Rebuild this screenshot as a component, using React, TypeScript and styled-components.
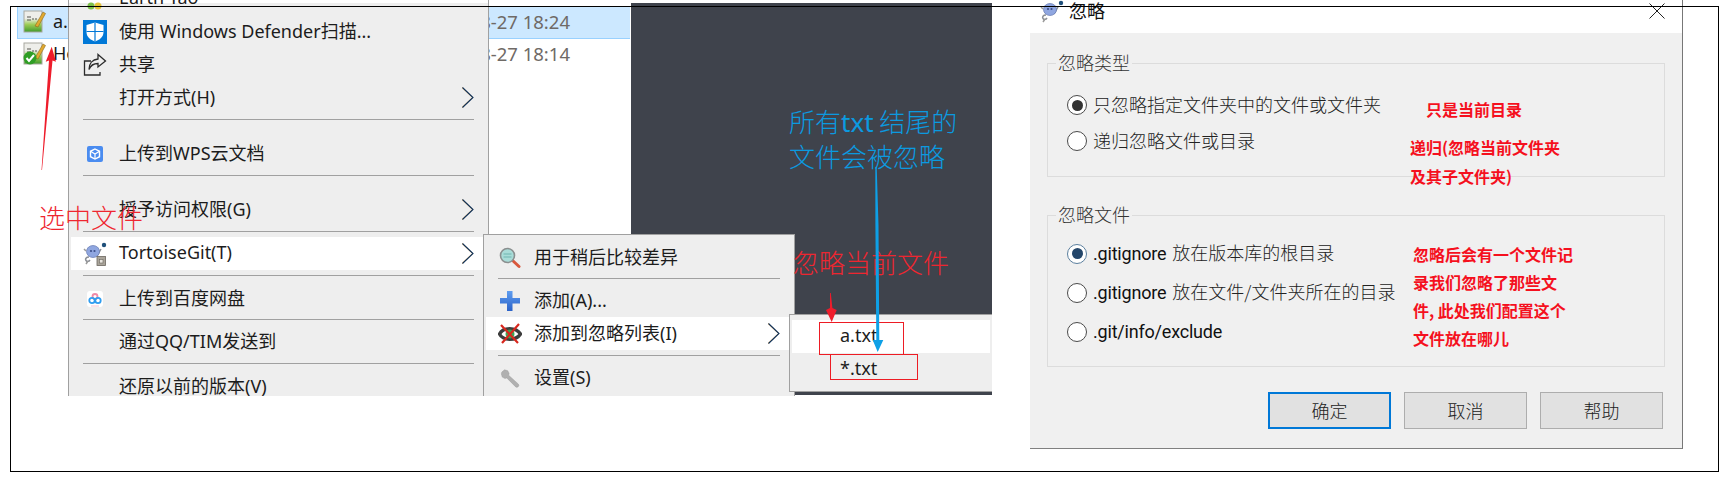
import React from "react";
import styled, { createGlobalStyle } from "styled-components";

const CJK = `"Noto Sans CJK SC", sans-serif`;

const GlobalStyle = createGlobalStyle`
  html, body {
    margin: 0;
    background: #fff;
  }
  body {
    width: 1726px;
    height: 477px;
    overflow: hidden;
    font-family: "Noto Sans", ${CJK};
    color: #1a1a1a;
  }
`;

const Stage = styled.div`
  position: relative;
  display: flex;
  width: 1726px;
  height: 477px;
  overflow: hidden;
`;

const Collage = styled.div`
  position: relative;
  flex: 0 0 1030px;
  height: 477px;
`;

const Frame = styled.div`
  position: absolute;
  left: 10px;
  top: 6px;
  width: 1707px;
  height: 464px;
  border: 1px solid #000;
  pointer-events: none;
  z-index: 5;
`;

const FileList = styled.div`
  position: absolute;
  left: 17px;
  top: 7px;
  width: 613px;
`;

const FileRow = styled.div<{ $selected?: boolean }>`
  display: grid;
  grid-template-columns: 30px 1fr auto;
  align-items: center;
  box-sizing: border-box;
  height: 32px;
  padding: 0 60px 4px 6px;
  font-size: 18px;
  background: ${(p) => (p.$selected ? "#cce8ff" : "#fff")};
  box-shadow: ${(p) => (p.$selected ? "inset 0 -1px #99d1ff, inset 1px 0 #99d1ff" : "none")};
`;

const FileDate = styled.span`
  font-size: 18.5px;
  color: #6f6a66;
`;

const DarkPanel = styled.div`
  position: absolute;
  left: 631px;
  top: 3px;
  width: 361px;
  height: 392px;
  background: #3f434c;
`;

const Menu = styled.div<{ $left: number; $top: number; $width: number; $height: number }>`
  position: absolute;
  left: ${(p) => p.$left}px;
  top: ${(p) => p.$top}px;
  width: ${(p) => p.$width}px;
  height: ${(p) => p.$height}px;
  box-sizing: border-box;
  padding: 0 2px;
  overflow: hidden;
  display: flex;
  flex-direction: column;
  background: #eeeeee;
  border: 1px solid #a0a0a0;
`;

const RootMenu = styled(Menu)`
  border-top: none;
  border-bottom: none;
  background: linear-gradient(#fff 3px, #eeeeee 3px);
`;

const SubMenu = styled(Menu)`
  border-bottom: none;
`;

const LeafMenu = styled(Menu)`
  border-right: none;
`;

const MenuRow = styled.div<{ $active?: boolean; $offset?: number }>`
  flex: 0 0 33px;
  display: grid;
  grid-template-columns: 36px 1fr 12px;
  align-items: center;
  padding: 0 12px;
  margin-top: ${(p) => p.$offset ?? 0}px;
  font-size: 18px;
  white-space: nowrap;
  color: #1c1c1c;
  background: ${(p) => (p.$active ? "#fff" : "transparent")};
`;

const MenuLabel = styled.span`
  grid-column: 2;
  padding-bottom: 4px;
`;

const IconSlot = styled.span`
  display: flex;
  align-items: center;
  justify-content: center;
  width: 24px;
  height: 24px;
`;

const MenuLine = styled.div<{ $before: number; $after: number }>`
  flex: 0 0 1px;
  margin: ${(p) => p.$before}px 12px ${(p) => p.$after}px;
  background: #a0a0a0;
`;

const Note = styled.div<{ $left: number; $top: number; $color?: string; $line?: number }>`
  position: absolute;
  left: ${(p) => p.$left}px;
  top: ${(p) => p.$top}px;
  font-size: 26px;
  line-height: ${(p) => p.$line ?? 36}px;
  font-weight: 300;
  color: ${(p) => p.$color ?? "#ee2630"};
  font-family: ${CJK};
  white-space: nowrap;
  z-index: 3;
`;

const NoteLatin = styled.span`
  font-family: "Noto Sans", ${CJK};
  font-weight: 400;
`;

const RedBox = styled.div<{ $left: number; $top: number; $width: number; $height: number }>`
  position: absolute;
  left: ${(p) => p.$left}px;
  top: ${(p) => p.$top}px;
  width: ${(p) => p.$width}px;
  height: ${(p) => p.$height}px;
  box-sizing: border-box;
  border: 1.5px solid #ed1c24;
  z-index: 3;
`;

const ArrowLayer = styled.svg`
  position: absolute;
  left: 0;
  top: 0;
  z-index: 4;
`;

const Dialog = styled.div`
  position: relative;
  flex: 0 0 653px;
  height: 449px;
  box-sizing: border-box;
  display: flex;
  flex-direction: column;
  border-right: 1px solid #777;
  border-bottom: 1px solid #808080;
  background: #fff;
`;

const TitleBar = styled.div`
  flex: 0 0 33px;
  display: flex;
  align-items: flex-start;
  gap: 5px;
  padding: 0 17px 0 10px;
  font-size: 18px;
  line-height: 20px;
  color: #111;
  font-family: ${CJK};
`;

const CloseButton = styled.span`
  margin: 3px 0 0 auto;
  display: flex;
`;

const DialogBody = styled.div`
  flex: 1;
  background: #f0f0f0;
  padding: 30px 17px 0;
  display: flex;
  flex-direction: column;
`;

const Group = styled.div<{ $height: number; $top: number; $row: number; $gap?: number }>`
  position: relative;
  box-sizing: border-box;
  height: ${(p) => p.$height}px;
  margin-bottom: ${(p) => p.$gap ?? 0}px;
  padding: ${(p) => p.$top}px 0 0 19px;
  border: 1px solid #dcdcdc;
  display: grid;
  grid-auto-rows: ${(p) => p.$row}px;
`;

const Legend = styled.div`
  position: absolute;
  left: 8px;
  top: -12px;
  padding: 0 2px;
  background: #f0f0f0;
  font-size: 18px;
  line-height: 20px;
  font-weight: 300;
  font-family: ${CJK};
  color: #333;
`;

const RadioRow = styled.div`
  display: flex;
  align-items: center;
  gap: 6px;
  font-size: 18px;
  font-weight: 300;
  color: #222;
  white-space: nowrap;
  font-family: ${CJK};
`;

const RadioLabel = styled.span`
  padding-bottom: 3px;
`;

const Mono = styled.span`
  font-family: Roboto, ${CJK};
  font-weight: 400;
  color: #111;
  letter-spacing: -0.2px;
  margin-right: 6px;
`;

const Radio = styled.span<{ $on?: boolean; $accent?: boolean }>`
  flex: 0 0 20px;
  width: 20px;
  height: 20px;
  box-sizing: border-box;
  border-radius: 50%;
  border: 1.5px solid ${(p) => (p.$accent ? "#5b7f9e" : "#4a4a4a")};
  background: #fff;
  display: flex;
  align-items: center;
  justify-content: center;

  &::after {
    content: "";
    display: ${(p) => (p.$on ? "block" : "none")};
    width: 11px;
    height: 11px;
    border-radius: 50%;
    background: ${(p) => (p.$accent ? "#24466a" : "#333")};
  }
`;

const ButtonBar = styled.div`
  margin-top: 25px;
  padding-right: 2px;
  display: flex;
  justify-content: flex-end;
  gap: 13px;
`;

const Button = styled.div<{ $primary?: boolean }>`
  width: 123px;
  height: 37px;
  box-sizing: border-box;
  padding-bottom: 2px;
  display: flex;
  align-items: center;
  justify-content: center;
  font-size: 18px;
  font-weight: 300;
  font-family: ${CJK};
  color: #222;
  background: #e1e1e1;
  border: ${(p) => (p.$primary ? "2px solid #0078d7" : "1px solid #adadad")};
`;

const DialogNote = styled(Note)`
  font-size: 16px;
  font-weight: 700;
  color: #f5101e;
`;

function FileIcon({ ok }: { ok?: boolean }) {
  return (
    <svg width="24" height="24" viewBox="0 0 24 24">
      <defs>
        <linearGradient id="sheet" x1="0" y1="0" x2="0" y2="1">
          <stop offset="0.35" stopColor="#eeeeea" />
          <stop offset="0.65" stopColor="#9ccb55" />
          <stop offset="1" stopColor="#3f9a2b" />
        </linearGradient>
      </defs>
      <rect x="1" y="2" width="18" height="21" fill="url(#sheet)" stroke="#a8a8a0" />
      <path d="M5 7v6M7 7v6M9 10h6" stroke="#55554e" strokeWidth="1" strokeDasharray="2 1" />
      <path d="M12 17L20 3l2.5 1.5L15 18z" fill="#e2a92e" stroke="#8a6a20" strokeWidth="0.6" />
      {ok && (
        <>
          <circle cx="7" cy="17" r="6.500" fill="#2f9e25" />
          <path d="M3.500 17l2.500 3 5-6" fill="none" stroke="#fff" strokeWidth="2" />
        </>
      )}
    </svg>
  );
}

function DefenderIcon() {
  return (
    <svg width="24" height="24" viewBox="0 0 24 24">
      <rect width="24" height="24" fill="#0078d7" />
      <path d="M12 2.5l8.500 2.500v7c0 5-4 8-8.500 9.500C7.500 20 3.500 17 3.500 12V5z" fill="#fff" />
      <path d="M12 2.500v19M3.500 11.500h17" stroke="#0078d7" strokeWidth="1.200" />
    </svg>
  );
}

function ShareIcon() {
  return (
    <svg width="24" height="24" viewBox="0 0 24 24" fill="none" stroke="#2b2b2b" strokeWidth="1.300">
      <path d="M8 8H1.500v14H17v-3" />
      <path d="M15 1.500L22.500 8 15 14v-3.500c-4.500 0-7.500 2-9 6 0-6 3.500-10 9-10.500z" />
    </svg>
  );
}

function WpsIcon() {
  return (
    <svg width="16" height="16" viewBox="0 0 16 16">
      <rect width="16" height="16" rx="2" fill="#4a8cf0" />
      <path d="M8 3l4.500 2.300v5.400L8 13l-4.500-2.300V5.300z" fill="none" stroke="#fff" strokeWidth="1.400" />
      <path d="M3.500 5.300L8 8l4.500-2.700M8 8v5" fill="none" stroke="#fff" strokeWidth="1.200" />
    </svg>
  );
}

function TortoiseIcon({ badge }: { badge?: boolean }) {
  return (
    <svg width="24" height="24" viewBox="0 0 24 24">
      <path d="M6 15c-3 0-4 2-3 3.500s3 1 4-.5M14 14l4-7" fill="none" stroke="#8b8f96" strokeWidth="1.500" />
      <ellipse cx="10" cy="9.500" rx="6.500" ry="6" fill="#8fa6e0" stroke="#6478b0" strokeWidth="0.700" />
      <circle cx="8" cy="9" r="1.100" fill="#3d4f8a" />
      <circle cx="11.500" cy="9" r="1.100" fill="#3d4f8a" />
      <circle cx="21" cy="3" r="2.200" fill="#1f4f7a" />
      <path d="M3 9L1 7M5 19l-2 3" stroke="#9a9a9a" strokeWidth="1.500" />
      {badge && (
        <>
          <rect x="14" y="14.500" width="8.500" height="9" fill="#a9a49a" stroke="#6b675f" strokeWidth="0.800" />
          <rect x="16.500" y="17.500" width="3.500" height="3.500" fill="#e8e5df" stroke="#6b675f" strokeWidth="0.600" />
        </>
      )}
    </svg>
  );
}

function BaiduIcon() {
  return (
    <svg width="16" height="16" viewBox="0 0 16 16">
      <rect width="16" height="16" rx="3" fill="#fff" />
      <circle cx="8" cy="5.500" r="2.500" fill="none" stroke="#ef8aa8" strokeWidth="1.800" />
      <circle cx="5" cy="9.500" r="2.700" fill="none" stroke="#2f9df0" strokeWidth="1.800" />
      <circle cx="11" cy="9.500" r="2.700" fill="none" stroke="#2f9df0" strokeWidth="1.800" />
      <path d="M4 15h8" stroke="#f5c2d2" strokeWidth="1" />
    </svg>
  );
}

function TopIcon() {
  return (
    <svg width="24" height="24" viewBox="0 0 24 24">
      <circle cx="8" cy="19" r="3.500" fill="#7cc04a" />
      <circle cx="15" cy="19" r="3.500" fill="#e6c53a" />
    </svg>
  );
}

function LensIcon() {
  return (
    <svg width="22" height="22" viewBox="0 0 22 22">
      <path d="M12.500 12.500L20 19.500" stroke="#d9583c" strokeWidth="3" strokeLinecap="round" />
      <circle cx="8.500" cy="8.500" r="7" fill="#a9dcd8" stroke="#8a8f8f" strokeWidth="1.600" />
      <path d="M4.500 7h8M4.500 10h8" stroke="#6fb5b0" strokeWidth="1" />
    </svg>
  );
}

function PlusIcon() {
  return (
    <svg width="22" height="22" viewBox="0 0 22 22">
      <defs>
        <linearGradient id="plus" x1="0" y1="0" x2="0" y2="1">
          <stop offset="0" stopColor="#5f9df0" />
          <stop offset="1" stopColor="#2a62c8" />
        </linearGradient>
      </defs>
      <path d="M8 1h5.500v7H21v5.500h-7.500V21H8v-7.500H1V8h7z" fill="url(#plus)" />
    </svg>
  );
}

function EyeIcon() {
  return (
    <svg width="24" height="22" viewBox="0 0 24 22">
      <path d="M1.500 11C5 4 18 4 22.500 11c-4.500 7-17.500 7-21 0z" fill="#fff" stroke="#3d3d3d" strokeWidth="3.400" />
      <circle cx="12" cy="11" r="4.500" fill="#3aa655" />
      <path d="M3 2l17 18M21 1L4 20" stroke="#d8281e" strokeWidth="2.200" />
    </svg>
  );
}

function WrenchIcon() {
  return (
    <svg width="20" height="20" viewBox="0 0 22 22">
      <path
        d="M2 4.500L5 2l3.500 1 1.500 3-.5 2L20 17.500a2 2 0 0 1-3 3L7.500 11l-2 .5L2.500 10 1.500 6.500z"
        fill="#b0b0b0"
        stroke="#9a9a9a"
        strokeWidth="0.500"
      />
    </svg>
  );
}

function Chevron() {
  return (
    <svg width="12" height="21" viewBox="0 0 12 21" fill="none">
      <path d="M0.500 0.500L11 10.500 0.500 20.500" stroke="#e39a3c" strokeWidth="1" transform="translate(-0.500 0)" />
      <path d="M0.500 0.500L11 10.500 0.500 20.500" stroke="#0c2f57" strokeWidth="1.100" />
    </svg>
  );
}

function CloseIcon() {
  return (
    <svg width="16" height="16" viewBox="0 0 16 16">
      <path d="M0.500 0.500l15 15M15.500 0.500l-15 15" stroke="#222" strokeWidth="1" />
    </svg>
  );
}

export default function App(): JSX.Element {
  return (
    <Stage>
      <GlobalStyle />
      <Collage>
        <FileList>
          <FileRow $selected>
            <FileIcon />
            <span>a.txt</span>
            <FileDate>2020-08-27 18:24</FileDate>
          </FileRow>
          <FileRow>
            <FileIcon ok />
            <span>HelloWorld.txt</span>
            <FileDate>2020-08-27 18:14</FileDate>
          </FileRow>
        </FileList>

        <DarkPanel />

        <RootMenu $left={68} $top={0} $width={421} $height={396}>
          <MenuRow $offset={-18}>
            <IconSlot><TopIcon /></IconSlot>
            <MenuLabel>Earth Tao</MenuLabel>
          </MenuRow>
          <MenuRow>
            <IconSlot><DefenderIcon /></IconSlot>
            <MenuLabel>使用 Windows Defender扫描...</MenuLabel>
          </MenuRow>
          <MenuRow>
            <IconSlot><ShareIcon /></IconSlot>
            <MenuLabel>共享</MenuLabel>
          </MenuRow>
          <MenuRow>
            <MenuLabel>打开方式(H)</MenuLabel>
            <Chevron />
          </MenuRow>
          <MenuLine $before={5} $after={17} />
          <MenuRow>
            <IconSlot><WpsIcon /></IconSlot>
            <MenuLabel>上传到WPS云文档</MenuLabel>
          </MenuRow>
          <MenuLine $before={5} $after={17} />
          <MenuRow>
            <MenuLabel>授予访问权限(G)</MenuLabel>
            <Chevron />
          </MenuRow>
          <MenuLine $before={5} $after={5} />
          <MenuRow $active>
            <IconSlot><TortoiseIcon badge /></IconSlot>
            <MenuLabel>TortoiseGit(T)</MenuLabel>
            <Chevron />
          </MenuRow>
          <MenuLine $before={5} $after={6} />
          <MenuRow>
            <IconSlot><BaiduIcon /></IconSlot>
            <MenuLabel>上传到百度网盘</MenuLabel>
          </MenuRow>
          <MenuLine $before={4} $after={5} />
          <MenuRow>
            <MenuLabel>通过QQ/TIM发送到</MenuLabel>
          </MenuRow>
          <MenuLine $before={5} $after={6} />
          <MenuRow>
            <MenuLabel>还原以前的版本(V)</MenuLabel>
          </MenuRow>
        </RootMenu>

        <SubMenu $left={483} $top={234} $width={312} $height={162}>
          <MenuRow $offset={6}>
            <IconSlot><LensIcon /></IconSlot>
            <MenuLabel>用于稍后比较差异</MenuLabel>
          </MenuRow>
          <MenuLine $before={4} $after={5} />
          <MenuRow>
            <IconSlot><PlusIcon /></IconSlot>
            <MenuLabel>添加(A)...</MenuLabel>
          </MenuRow>
          <MenuRow $active>
            <IconSlot><EyeIcon /></IconSlot>
            <MenuLabel>添加到忽略列表(I)</MenuLabel>
            <Chevron />
          </MenuRow>
          <MenuLine $before={5} $after={5} />
          <MenuRow>
            <IconSlot><WrenchIcon /></IconSlot>
            <MenuLabel>设置(S)</MenuLabel>
          </MenuRow>
        </SubMenu>

        <LeafMenu $left={789} $top={314} $width={203} $height={78}>
          <MenuRow $active $offset={5}>
            <MenuLabel>a.txt</MenuLabel>
          </MenuRow>
          <MenuRow>
            <MenuLabel>*.txt</MenuLabel>
          </MenuRow>
        </LeafMenu>

        <Note $left={39} $top={199}>选中文件</Note>
        <Note $left={793} $top={244}>忽略当前文件</Note>
        <Note $left={789} $top={103} $color="#0b9ae0">所有<NoteLatin>txt</NoteLatin> 结尾的</Note>
        <Note $left={789} $top={138} $color="#0b9ae0">文件会被忽略</Note>

        <RedBox $left={819} $top={322} $width={85} $height={33} />
        <RedBox $left={830} $top={354} $width={88} $height={26} />

        <ArrowLayer width="1030" height="477" viewBox="0 0 1030 477">
          <polygon points="51.700,46.700 56,61.700 52.500,60.500 42,170 41.500,170 49,60.500 45.700,61.700" fill="#ee1c2b" />
          <polygon points="830,293 830.800,293 832.400,308 836.700,310 831.700,322 826,310 830,308" fill="#ee1c2b" />
          <polygon points="875.300,167 876.700,167 878.500,225 879.300,340 883.300,340 877.700,352 872.700,340 876.300,340 875.400,225" fill="#0ea0e6" />
        </ArrowLayer>
      </Collage>

      <Dialog>
        <TitleBar>
          <TortoiseIcon />
          <span>忽略</span>
          <CloseButton><CloseIcon /></CloseButton>
        </TitleBar>
        <DialogBody>
          <Group $height={114} $top={23} $row={36} $gap={38}>
            <Legend>忽略类型</Legend>
            <RadioRow><Radio $on /><RadioLabel>只忽略指定文件夹中的文件或文件夹</RadioLabel></RadioRow>
            <RadioRow><Radio /><RadioLabel>递归忽略文件或目录</RadioLabel></RadioRow>
          </Group>
          <Group $height={152} $top={18} $row={39}>
            <Legend>忽略文件</Legend>
            <RadioRow><Radio $on $accent /><RadioLabel><Mono>.gitignore</Mono>放在版本库的根目录</RadioLabel></RadioRow>
            <RadioRow><Radio /><RadioLabel><Mono>.gitignore</Mono>放在文件/文件夹所在的目录</RadioLabel></RadioRow>
            <RadioRow><Radio /><RadioLabel><Mono>.git/info/exclude</Mono></RadioLabel></RadioRow>
          </Group>
          <ButtonBar>
            <Button $primary>确定</Button>
            <Button>取消</Button>
            <Button>帮助</Button>
          </ButtonBar>
        </DialogBody>
        <DialogNote $left={396} $top={95} $line={28}>只是当前目录</DialogNote>
        <DialogNote $left={380} $top={133} $line={29}>
          递归(忽略当前文件夹
          <br />
          及其子文件夹)
        </DialogNote>
        <DialogNote $left={383} $top={240} $line={28}>
          忽略后会有一个文件记
          <br />
          录我们忽略了那些文
          <br />
          件, 此处我们配置这个
          <br />
          文件放在哪儿
        </DialogNote>
      </Dialog>
      <Frame />
    </Stage>
  );
}
